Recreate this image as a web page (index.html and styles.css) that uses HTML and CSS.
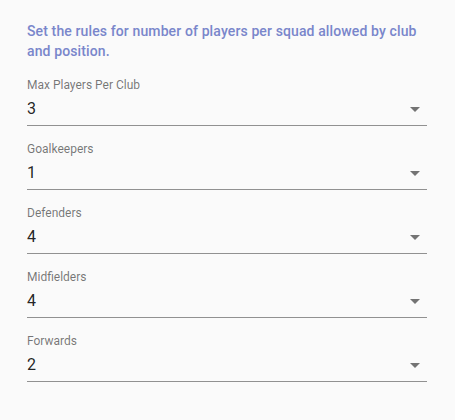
FILE: index.html
```html
<!DOCTYPE html>
<html>
<head>
<meta charset="utf-8">
<link rel="stylesheet" href="styles.css">
</head>
<body>
<div class="panel">
  <p class="intro">Set the rules for number of players per squad allowed by club and position.</p>
  <div class="field">
    <div class="label">Max Players Per Club</div>
    <div class="select"><span class="value">3</span><span class="arrow"></span></div>
  </div>
  <div class="field">
    <div class="label">Goalkeepers</div>
    <div class="select"><span class="value">1</span><span class="arrow"></span></div>
  </div>
  <div class="field">
    <div class="label">Defenders</div>
    <div class="select"><span class="value">4</span><span class="arrow"></span></div>
  </div>
  <div class="field">
    <div class="label">Midfielders</div>
    <div class="select"><span class="value">4</span><span class="arrow"></span></div>
  </div>
  <div class="field">
    <div class="label">Forwards</div>
    <div class="select"><span class="value">2</span><span class="arrow"></span></div>
  </div>
</div>
</body>
</html>
```
FILE: styles.css
```css
html, body {
  margin: 0;
  padding: 0;
  background: #fafafa;
  font-family: Roboto, "Liberation Sans", sans-serif;
}
.panel {
  width: 400px;
  padding: 21px 28px 0 27px;
}
.intro {
  margin: 0 0 16px 0;
  font-size: 14px;
  font-weight: 500;
  line-height: 20px;
  letter-spacing: 0.12px;
  color: #7986cb;
}
.field {
  margin-bottom: 15px;
}
.label {
  font-size: 12px;
  line-height: 16px;
  color: rgba(0, 0, 0, 0.54);
}
.select {
  display: flex;
  align-items: center;
  justify-content: space-between;
  padding: 4px 7px 4px 0;
  border-bottom: 1px solid rgba(0, 0, 0, 0.42);
}
.value {
  font-size: 16px;
  line-height: 24px;
  color: rgba(0, 0, 0, 0.87);
}
.arrow {
  width: 0;
  height: 0;
  border-left: 5px solid transparent;
  border-right: 5px solid transparent;
  border-top: 5px solid rgba(0, 0, 0, 0.54);
}
```
